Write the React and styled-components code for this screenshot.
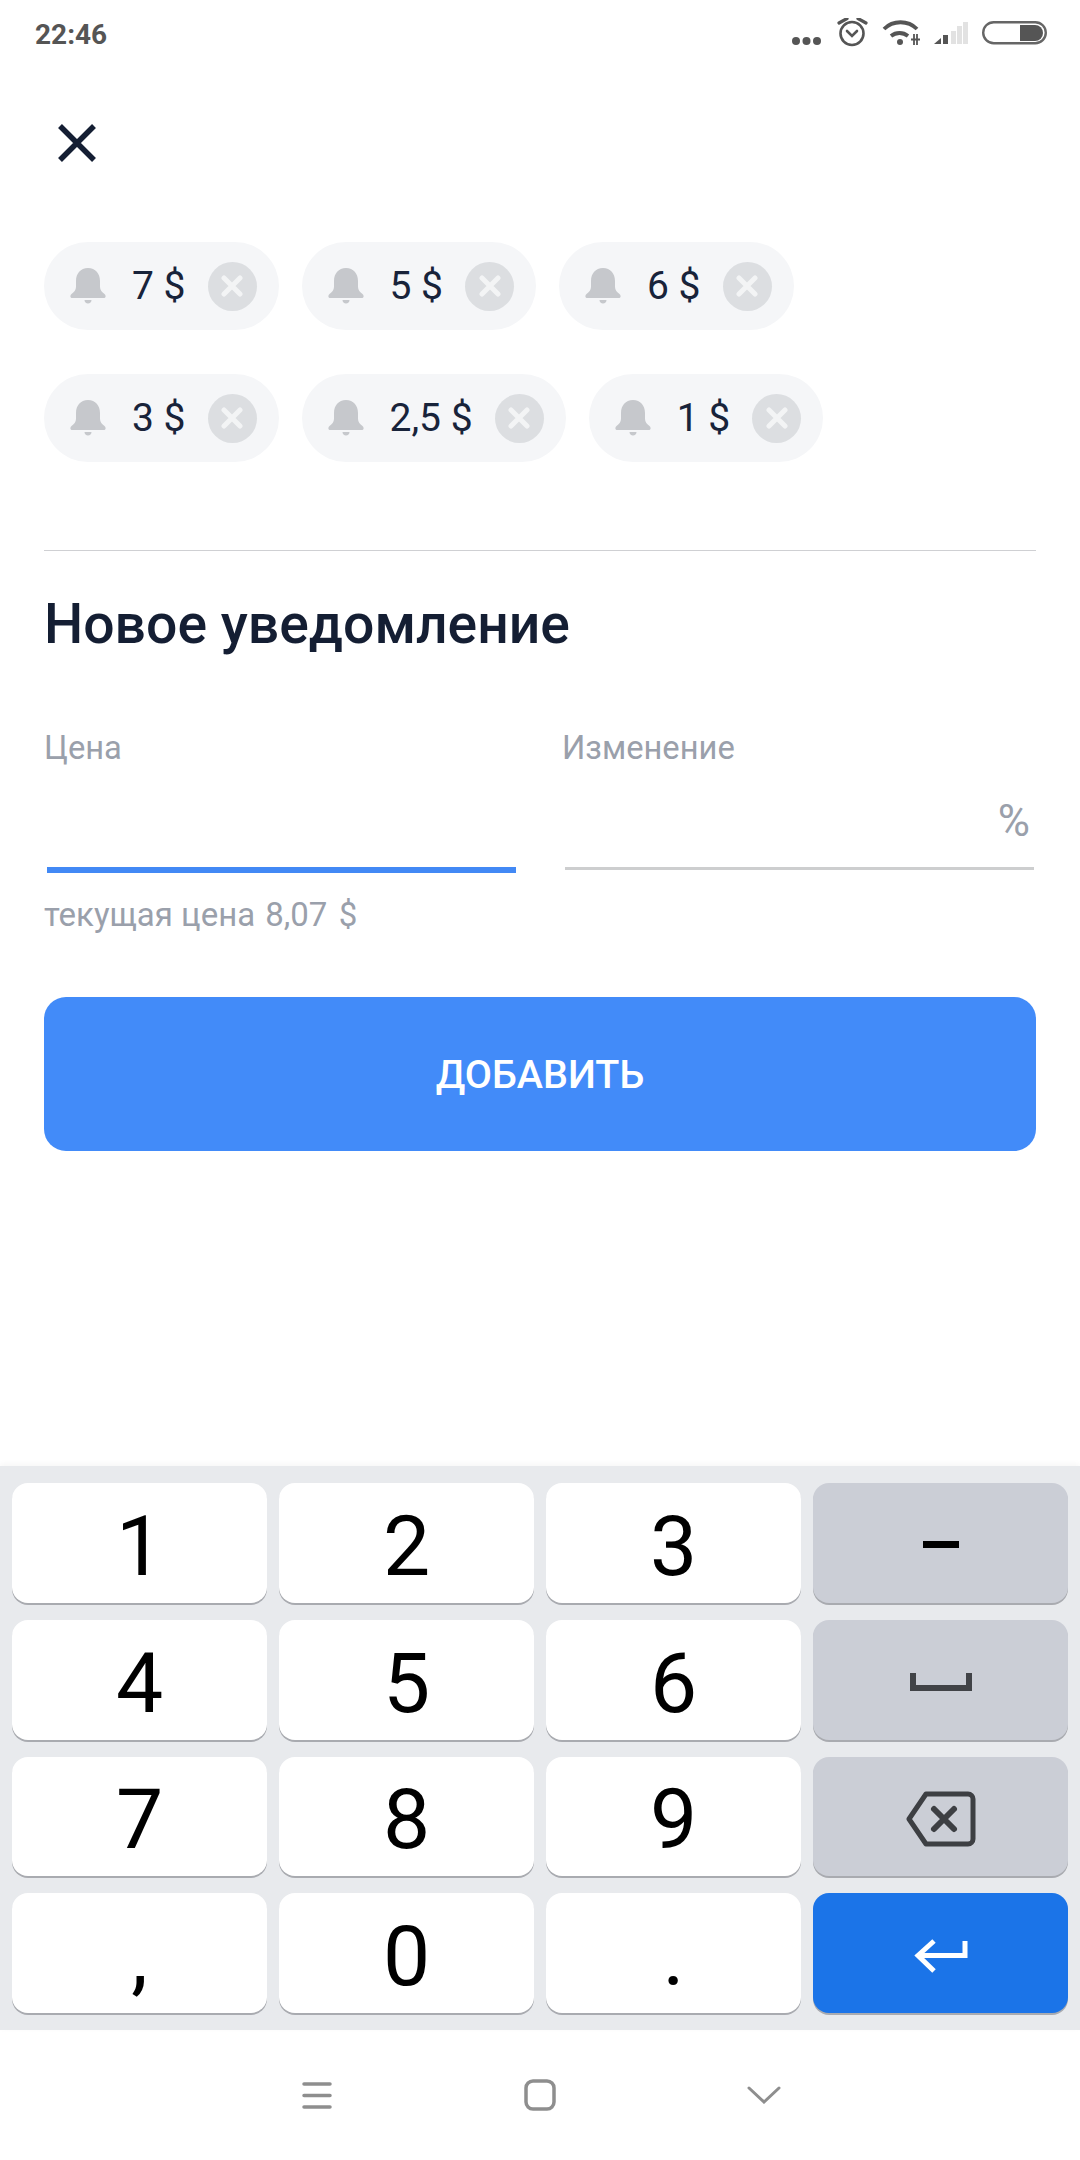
import styled, { createGlobalStyle } from 'styled-components';

const GlobalStyle = createGlobalStyle`
  html, body {
    margin: 0;
    padding: 0;
    background: #fff;
  }
  * {
    box-sizing: border-box;
  }
`;

const Screen = styled.div`
  width: 1080px;
  height: 2160px;
  display: flex;
  flex-direction: column;
  background: #fff;
  font-family: Roboto, "Liberation Sans", sans-serif;
  overflow: hidden;
`;

const StatusBar = styled.div`
  height: 68px;
  flex: none;
  display: flex;
  align-items: flex-start;
  justify-content: space-between;
  padding: 18px 33px 0 35px;
  color: #555;
`;

const Clock = styled.span`
  margin-top: 1px;
  font-size: 28px;
  line-height: 32px;
  font-weight: 700;
`;

const StatusIcons = styled.div`
  display: flex;
  align-items: center;
  height: 30px;
`;

const Main = styled.main`
  flex: 1;
  min-height: 0;
  padding: 56px 44px 0;
`;

const CloseButton = styled.button`
  display: block;
  width: 38px;
  height: 38px;
  margin: 0 0 0 14px;
  padding: 0;
  border: 0;
  background: none;
  color: #141e33;
`;

const ChipList = styled.div`
  display: flex;
  flex-wrap: wrap;
  gap: 44px 23px;
  margin-top: 80px;
`;

const Chip = styled.div`
  height: 88px;
  display: flex;
  align-items: center;
  padding: 0 22px 0 26px;
  border-radius: 44px;
  background: #f5f6f8;
`;

const ChipPrice = styled.span`
  margin: 0 22px 0 26px;
  font-size: 39px;
  color: #18233a;
  white-space: nowrap;
`;

const ChipRemove = styled.span`
  width: 49px;
  height: 49px;
  border-radius: 50%;
  background: #dcdee1;
  display: flex;
  align-items: center;
  justify-content: center;
`;

const Divider = styled.hr`
  height: 1px;
  margin: 88px 0 0;
  border: 0;
  background: #cfd0d3;
`;

const Title = styled.h2`
  margin: 44px 0 0;
  font-size: 55.3px;
  line-height: 60px;
  font-weight: 500;
  color: #141e33;
`;

const Fields = styled.div`
  display: grid;
  grid-template-columns: 1fr 1fr;
  column-gap: 44px;
  margin-top: 73px;
`;

const FieldLabel = styled.div`
  font-size: 32.7px;
  line-height: 40px;
  color: #9aa0ab;
`;

const FieldInput = styled.div`
  height: ${props => (props.$active ? '105px' : '102px')};
  margin: 0 2px 0 3px;
  display: flex;
  align-items: center;
  justify-content: flex-end;
  border-bottom: ${props => (props.$active ? '6px solid #4289f5' : '3px solid #cdcecf')};
  font-size: 44px;
  color: #9aa0ab;
  padding: 7px 4px 0 0;
`;

const Hint = styled.div`
  display: flex;
  align-items: baseline;
  margin-top: 22px;
  font-size: 33px;
  line-height: 40px;
  color: #9aa0ab;
`;

const HintPrice = styled.span`
  margin-left: 10px;
  word-spacing: -2.5px;
`;

const AddButton = styled.button`
  display: block;
  width: 100%;
  height: 154px;
  margin-top: 62px;
  padding-top: 2px;
  border: 0;
  border-radius: 22px;
  background: #428bf9;
  color: #fff;
  font-family: inherit;
  font-size: 39.5px;
  font-weight: 500;
`;

const Keyboard = styled.div`
  height: 564px;
  flex: none;
  display: grid;
  grid-template-columns: repeat(4, 255px);
  grid-template-rows: repeat(4, 1fr);
  gap: 17px 12px;
  padding: 17px 12px;
  background: #e8eaed;
  box-shadow: 0 -2px 6px rgba(0, 0, 0, 0.04);
`;

const Key = styled.div`
  display: flex;
  align-items: center;
  justify-content: center;
  padding-top: ${props => (props.$text ? '8px' : '5px')};
  border-radius: 16px;
  background: ${props => props.$bg || '#fff'};
  box-shadow: 0 2px 0 #a9abb0;
  font-size: 84px;
  line-height: 1;
  color: #000;
`;

const NavBar = styled.div`
  height: 130px;
  flex: none;
  display: flex;
  align-items: center;
  padding-left: 302px;
  gap: 192px;
  color: #8e8e8e;
`;

const BackIcon = styled.svg`
  margin-left: -1px;
`;

function StatusGlyphs() {
  return (
    <StatusIcons>
      <svg width="258" height="30" viewBox="0 0 258 30" fill="none">
        {/* three notification dots */}
        <g fill="#555">
          <circle cx="7" cy="23" r="4" />
          <circle cx="17.500" cy="23" r="4" />
          <circle cx="28" cy="23" r="4" />
        </g>
        {/* alarm clock */}
        <g stroke="#555" strokeWidth="2.6" strokeLinecap="round">
          <circle cx="63" cy="15.500" r="11.500" />
          <path d="M58 13l5 5 5-5" />
          <path d="M50 5l8-4.500M69 0.500l8 4.500" strokeWidth="3.200" />
        </g>
        {/* wifi with transfer arrows */}
        <g stroke="#555" strokeWidth="3.800" fill="none">
          <path d="M95 11c9-9 24-9 33 0" />
          <path d="M102 18c5-4 12-4 17 0" />
        </g>
        <circle cx="111" cy="24" r="3" fill="#555" />
        <path d="M125 16v11M128 16v11M122 21.500h9" stroke="#555" strokeWidth="1.800" />
        {/* signal strength */}
        <path d="M145 26l7-6v6z" fill="#555" />
        <rect x="154" y="17" width="5" height="9" fill="#555" />
        <rect x="162" y="13" width="5" height="13" fill="#e2e2e2" />
        <rect x="168" y="8" width="5" height="18" fill="#e2e2e2" />
        <rect x="174" y="4" width="5" height="22" fill="#e2e2e2" />
        {/* battery */}
        <rect x="194.200" y="4.200" width="62.600" height="21" rx="10.500" stroke="#666" strokeWidth="2.400" />
        <path d="M231 7h15a8 8 0 0 1 0 16h-15z" fill="#555" />
      </svg>
    </StatusIcons>
  );
}

function BellIcon() {
  return (
    <svg width="36" height="36" viewBox="0 0 36 36" fill="#c6c8cc">
      <path d="M18 0c7.500 0 12 5.600 12 13v6c0 3 2 5 4.500 7 1.700 1.300 1.500 4-.8 4H2.300c-2.300 0-2.500-2.700-.8-4C4 24 6 22 6 19v-6C6 5.600 10.500 0 18 0z" />
      <path d="M14.500 32h7c0 2.200-1.500 3.600-3.500 3.600s-3.500-1.400-3.500-3.600z" />
    </svg>
  );
}

function CrossIcon() {
  return (
    <svg width="22" height="22" viewBox="0 0 22 22" stroke="#f3f4f5" strokeWidth="5" strokeLinecap="round">
      <path d="M3 3l16 16M19 3L3 19" />
    </svg>
  );
}

const chips = ['7 $', '5 $', '6 $', '3 $', '2,5 $', '1 $'];

const keys = [
  { label: '1' },
  { label: '2' },
  { label: '3' },
  {
    bg: '#cbced6',
    icon: (
      <svg width="36" height="8" viewBox="0 0 36 8">
        <rect width="36" height="7" fill="#000" />
      </svg>
    ),
  },
  { label: '4' },
  { label: '5' },
  { label: '6' },
  {
    bg: '#cbced6',
    icon: (
      <svg width="62" height="18" viewBox="0 0 62 18" fill="none" stroke="#414347" strokeWidth="6">
        <path d="M3 0v15h56V0" />
      </svg>
    ),
  },
  { label: '7' },
  { label: '8' },
  { label: '9' },
  {
    bg: '#cbced6',
    icon: (
      <svg width="70" height="56" viewBox="0 0 70 56" fill="none" stroke="#3d3f43" strokeWidth="5" strokeLinecap="round" strokeLinejoin="round">
        <path d="M20 3h42a5 5 0 0 1 5 5v40a5 5 0 0 1-5 5H20L3 28z" />
        <path d="M28 18l20 20M48 18L28 38" strokeWidth="6" />
      </svg>
    ),
  },
  { label: ',' },
  { label: '0' },
  { label: '.' },
  {
    bg: '#1b74e8',
    icon: (
      <svg width="54" height="34" viewBox="0 0 54 34" fill="none" stroke="#fff" strokeWidth="5">
        <path d="M51 2v14.500H5" />
        <path d="M20 2L4 16.500 20 32" />
      </svg>
    ),
  },
];

export default function App() {
  return (
    <Screen>
      <GlobalStyle />
      <StatusBar>
        <Clock>22:46</Clock>
        <StatusGlyphs />
      </StatusBar>
      <Main>
        <CloseButton>
          <svg width="38" height="38" viewBox="0 0 38 38" stroke="currentColor" strokeWidth="5.500">
            <path d="M2 2l34 34M36 2L2 36" />
          </svg>
        </CloseButton>
        <ChipList>
          {chips.map(price => (
            <Chip key={price}>
              <BellIcon />
              <ChipPrice>{price}</ChipPrice>
              <ChipRemove>
                <CrossIcon />
              </ChipRemove>
            </Chip>
          ))}
        </ChipList>
        <Divider />
        <Title>Новое уведомление</Title>
        <Fields>
          <div>
            <FieldLabel>Цена</FieldLabel>
            <FieldInput $active />
          </div>
          <div>
            <FieldLabel>Изменение</FieldLabel>
            <FieldInput>%</FieldInput>
          </div>
        </Fields>
        <Hint>
          <span>текущая цена</span>
          <HintPrice>8,07 &nbsp;$</HintPrice>
        </Hint>
        <AddButton>ДОБАВИТЬ</AddButton>
      </Main>
      <Keyboard>
        {keys.map((key, i) => (
          <Key key={i} $bg={key.bg} $text={Boolean(key.label)}>
            {key.label || key.icon}
          </Key>
        ))}
      </Keyboard>
      <NavBar>
        <svg width="30" height="27" viewBox="0 0 30 27" stroke="currentColor" strokeWidth="3.500" strokeLinecap="round">
          <path d="M2 2h26M2 13.500h26M2 25h26" />
        </svg>
        <svg width="32" height="32" viewBox="0 0 32 32" fill="none" stroke="currentColor" strokeWidth="3.500">
          <rect x="2" y="2" width="28" height="28" rx="7" />
        </svg>
        <BackIcon width="34" height="18" viewBox="0 0 34 18" fill="none" stroke="currentColor" strokeWidth="3" strokeLinecap="round">
          <path d="M2 2l15 14L32 2" />
        </BackIcon>
      </NavBar>
    </Screen>
  );
}
